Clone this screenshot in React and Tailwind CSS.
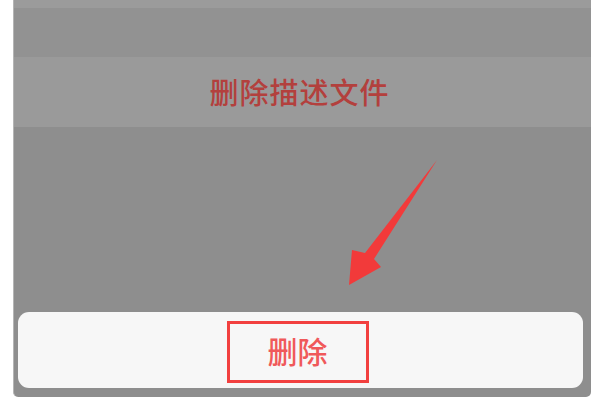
import React from 'react';

const cjk = { fontFamily: '"Noto Sans CJK SC", "Noto Sans", sans-serif' };

const Arrow = () => (
    <svg className="absolute inset-0 pointer-events-none" width="600" height="400" viewBox="0 0 600 400">
        <polygon
            points="437,160 374,259 381,267 349,285 352,250 365,253"
            fill="#f23a3a"
        />
    </svg>
);

export default function App() {
    return (
        <div className="relative w-[600px] h-[400px] bg-white overflow-hidden" style={cjk}>
            <div className="ml-[13px] w-[578px] h-[397px] bg-[#8e8e8e] rounded-b-[5px] border-l border-[#b5b5b5] flex flex-col">
                <div className="h-[8px] bg-[#9b9b9b]" />
                <div className="h-[49px] bg-[#929292]" />
                <div className="h-[70px] bg-[#9a9a9a] flex items-center justify-center">
                    <span className="text-[29px] leading-none font-medium tracking-[1px] text-[#b3403d] ml-[-6px] mt-[-2px]">删除描述文件</span>
                </div>
                <div className="flex-1" />
                <div className="ml-[4px] mr-[8px] mb-[9px] h-[76px] rounded-[11px] bg-[#f7f7f7] flex justify-center pt-[9px]">
                    <div className="w-[142px] h-[62px] mr-[6px] border-[3px] border-[#f2403f] flex items-center justify-center">
                        <span className="text-[30px] leading-none font-medium text-[#f0595a] mt-[-4px]">删除</span>
                    </div>
                </div>
            </div>
            <Arrow />
        </div>
    );
}
